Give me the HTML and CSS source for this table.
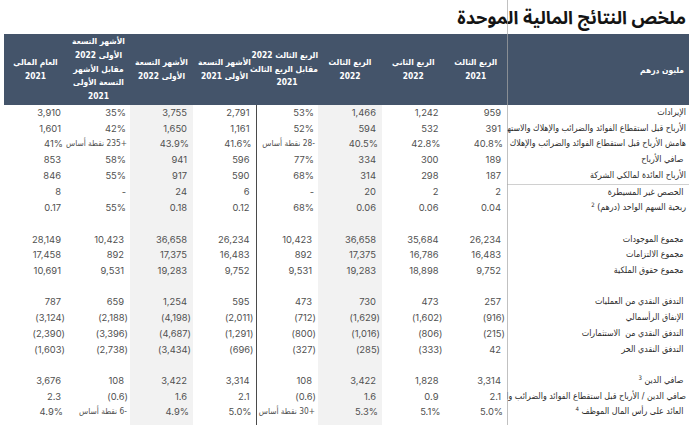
FILE: index.html
```html
<!DOCTYPE html>
<html lang="ar" dir="rtl">
<head>
<meta charset="utf-8">
<title>ملخص النتائج المالية الموحدة</title>
<link rel="stylesheet" href="styles.css">
</head>
<body>
<div class="page">
  <h1 class="title">ملخص النتائج المالية الموحدة</h1>
  <div class="divider"></div>
  <table class="fin">
    <colgroup>
      <col class="w-label"><col class="w-a"><col class="w-a"><col class="w-b"><col class="w-c"><col class="w-d"><col class="w-d"><col class="w-d"><col class="w-d">
    </colgroup>
    <thead>
      <tr>
        <th class="lbl-h">مليون درهم</th>
        <th>الربع الثالث<br>2021</th>
        <th>الربع الثاني<br>2022</th>
        <th>الربع الثالث<br>2022</th>
        <th>الربع الثالث 2022<br>مقابل الربع الثالث<br>2021</th>
        <th>الأشهر التسعة<br>الأولى 2021</th>
        <th>الأشهر التسعة<br>الأولى 2022</th>
        <th>الأشهر التسعة<br>الأولى 2022<br>مقابل الأشهر<br>التسعة الأولى<br>2021</th>
        <th>العام المالي<br>2021</th>
      </tr>
    </thead>
    <tbody>
      <tr><td class="lbl">الإيرادات</td><td>959</td><td>1,242</td><td>1,466</td><td class="pc">53%</td><td>2,791</td><td>3,755</td><td class="pc">35%</td><td>3,910</td></tr>
      <tr><td class="lbl">الأرباح قبل استقطاع الفوائد والضرائب والإهلاك والاستهلاك</td><td>391</td><td>532</td><td>594</td><td class="pc">52%</td><td>1,161</td><td>1,650</td><td class="pc">42%</td><td>1,601</td></tr>
      <tr><td class="lbl">هامش الأرباح قبل استقطاع الفوائد والضرائب والإهلاك والاستهلاك</td><td class="pc">40.8%</td><td class="pc">42.8%</td><td class="pc">40.5%</td><td class="bp">-28 نقطة أساس</td><td class="pc">41.6%</td><td class="pc">43.9%</td><td class="bp">+235 نقطة أساس</td><td class="pc">41%</td></tr>
      <tr><td class="lbl">&nbsp;صافي الأرباح</td><td>189</td><td>300</td><td>334</td><td class="pc">77%</td><td>596</td><td>941</td><td class="pc">58%</td><td>853</td></tr>
      <tr><td class="lbl sep">الأرباح العائدة لمالكي الشركة</td><td>187</td><td>298</td><td>314</td><td class="pc">68%</td><td>590</td><td>917</td><td class="pc">55%</td><td>846</td></tr>
      <tr><td class="lbl">&nbsp;الحصص غير المسيطرة</td><td>2</td><td>2</td><td>20</td><td class="pc">-</td><td>6</td><td>24</td><td class="pc">-</td><td>8</td></tr>
      <tr><td class="lbl">ربحية السهم الواحد (درهم) <sup class="fn">2</sup></td><td>0.04</td><td>0.06</td><td>0.06</td><td class="pc">68%</td><td>0.12</td><td>0.18</td><td class="pc">55%</td><td>0.17</td></tr>
      <tr class="gap"><td class="lbl"></td><td></td><td></td><td></td><td></td><td></td><td></td><td></td><td></td></tr>
      <tr><td class="lbl">&nbsp;مجموع الموجودات</td><td>26,234</td><td>35,684</td><td>36,658</td><td>10,423</td><td>26,234</td><td>36,658</td><td>10,423</td><td>28,149</td></tr>
      <tr><td class="lbl">&nbsp;مجموع الالتزامات</td><td>16,483</td><td>16,786</td><td>17,375</td><td>892</td><td>16,483</td><td>17,375</td><td>892</td><td>17,458</td></tr>
      <tr><td class="lbl">&nbsp;مجموع حقوق الملكية</td><td>9,752</td><td>18,898</td><td>19,283</td><td>9,531</td><td>9,752</td><td>19,283</td><td>9,531</td><td>10,691</td></tr>
      <tr class="gap"><td class="lbl"></td><td></td><td></td><td></td><td></td><td></td><td></td><td></td><td></td></tr>
      <tr><td class="lbl">&nbsp;التدفق النقدي من العمليات</td><td>257</td><td>473</td><td>730</td><td>473</td><td>595</td><td>1,254</td><td>659</td><td>787</td></tr>
      <tr><td class="lbl">&nbsp;الإنفاق الرأسمالي</td><td class="ng">(916)</td><td class="ng">(1,602)</td><td class="ng">(1,629)</td><td class="ng">(712)</td><td class="ng">(2,011)</td><td class="ng">(4,198)</td><td class="ng">(2,188)</td><td class="ng">(3,124)</td></tr>
      <tr><td class="lbl">&nbsp;التدفق النقدي من&nbsp; الاستثمارات</td><td class="ng">(215)</td><td class="ng">(806)</td><td class="ng">(1,016)</td><td class="ng">(800)</td><td class="ng">(1,291)</td><td class="ng">(4,687)</td><td class="ng">(3,396)</td><td class="ng">(2,390)</td></tr>
      <tr><td class="lbl">&nbsp;التدفق النقدي الحر</td><td>42</td><td class="ng">(333)</td><td class="ng">(285)</td><td class="ng">(327)</td><td class="ng">(696)</td><td class="ng">(3,434)</td><td class="ng">(2,738)</td><td class="ng">(1,603)</td></tr>
      <tr class="gap"><td class="lbl"></td><td></td><td></td><td></td><td></td><td></td><td></td><td></td><td></td></tr>
      <tr><td class="lbl">&nbsp;صافي الدين <sup class="fn">3</sup></td><td>3,314</td><td>1,828</td><td>3,422</td><td>108</td><td>3,314</td><td>3,422</td><td>108</td><td>3,676</td></tr>
      <tr><td class="lbl">صافي الدين / الأرباح قبل استقطاع الفوائد والضرائب والإهلاك والاستهلاك</td><td>2.1</td><td>0.9</td><td>1.6</td><td class="ng">(0.6)</td><td>2.1</td><td>1.6</td><td class="ng">(0.6)</td><td>2.3</td></tr>
      <tr><td class="lbl">&nbsp;العائد على رأس المال الموظف <sup class="fn">4</sup></td><td class="pc">5.0%</td><td class="pc">5.1%</td><td class="pc">5.3%</td><td class="bp">+30 نقطة أساس</td><td class="pc">5.0%</td><td class="pc">4.9%</td><td class="bp">-6 نقطة أساس</td><td class="pc">4.9%</td></tr>
      <tr class="gap"><td class="lbl"></td><td></td><td></td><td></td><td></td><td></td><td></td><td></td><td></td></tr>
    </tbody>
  </table>
</div>
</body>
</html>
```
FILE: styles.css
```css
html, body {
  margin: 0;
  padding: 0;
  background: #ffffff;
}

body {
  width: 700px;
  height: 425px;
  overflow: hidden;
  font-family: "Inter", "DejaVu Sans Condensed", "DejaVu Sans", sans-serif;
  color: #505050;
}

.page {
  position: relative;
  padding: 0 11px 0 4px;
  height: 425px;
  box-sizing: border-box;
}

.title {
  margin: 0;
  height: 34px;
  line-height: 37px;
  padding-right: 3px;
  text-align: right;
  font-family: "Noto Sans Arabic", "DejaVu Sans", sans-serif;
  font-size: 18px;
  font-weight: 700;
  color: #141414;
}

.divider {
  position: absolute;
  left: 507px;
  top: 0;
  width: 1px;
  height: 425px;
  background: #a6a6a6;
  opacity: 0.7;
  pointer-events: none;
}

.fin {
  width: 685px;
  table-layout: fixed;
  border-collapse: collapse;
  border-spacing: 0;
}

.w-label { width: 182px; }
.w-a { width: 62.5px; }
.w-b { width: 64px; }
.w-c { width: 62px; }
.w-d { width: 63px; }

.fin th {
  height: 68px;
  padding: 0;
  background: #44546a;
  color: #ffffff;
  font-family: "DejaVu Sans Condensed", "DejaVu Sans", sans-serif;
  font-size: 8.4px;
  font-weight: 700;
  line-height: 13.7px;
  text-align: center;
  vertical-align: middle;
  white-space: nowrap;
}

.fin th.lbl-h {
  text-align: right;
  padding-right: 5px;
  padding-top: 3px;
}

.fin td {
  height: 15.7px;
  padding: 0 6px 0 0;
  font-size: 9.4px;
  line-height: 15.7px;
  text-align: right;
  white-space: nowrap;
  vertical-align: middle;
}

.fin tbody td:nth-child(4),
.fin tbody td:nth-child(7) {
  background: #f2f2f2;
}

.fin tbody td:nth-child(5) {
  border-left: 1px solid #4a4a4a;
}

.fin td.pc { padding-right: 4px; }
.fin td.ng { padding-right: 2px; }

.fin td.bp {
  padding-right: 3px;
  font-family: "DejaVu Sans Condensed", "DejaVu Sans", sans-serif;
  font-size: 8.3px;
  overflow: visible;
}

.fin td.lbl {
  padding-right: 3px;
  overflow: hidden;
  font-family: "DejaVu Sans Condensed", "DejaVu Sans", sans-serif;
  font-size: 8.8px;
  color: #2b2b2b;
}

.fin td.sep {
  border-bottom: 1px solid #d0d0d0;
}

.fn {
  font-size: 6px;
  line-height: 0;
  vertical-align: 3px;
}
```
